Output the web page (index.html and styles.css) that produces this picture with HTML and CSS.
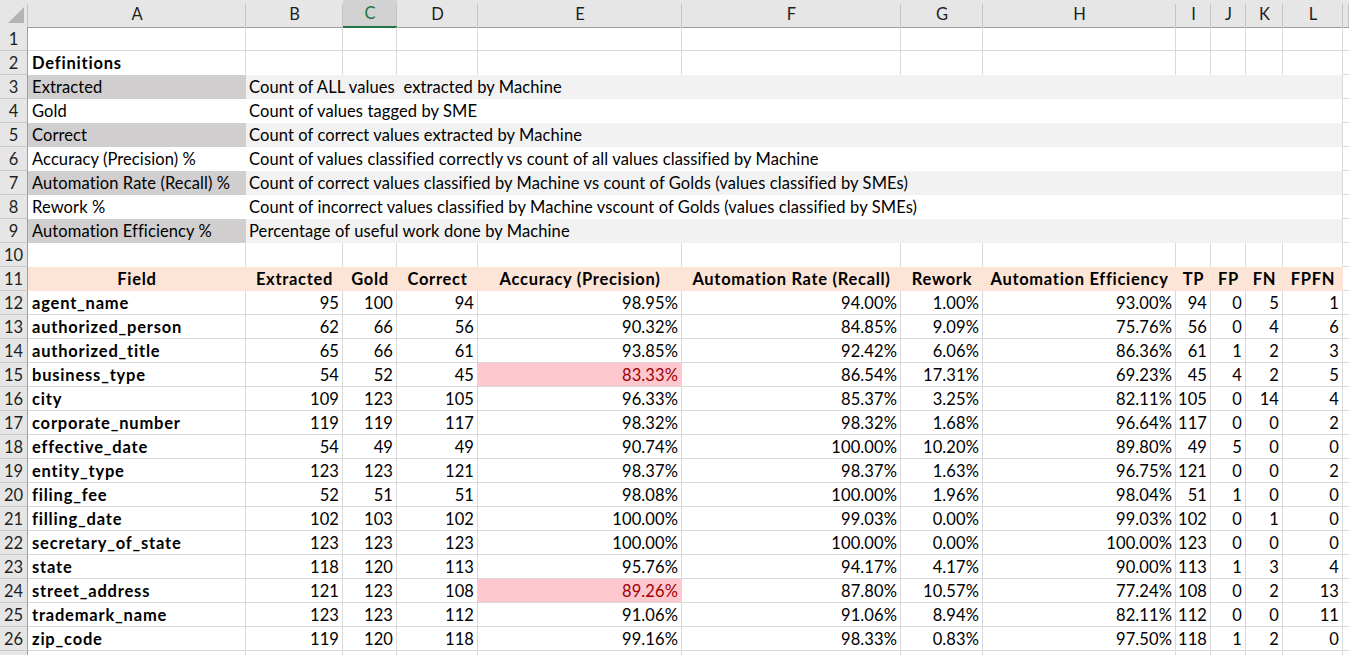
FILE: index.html
```html
<!DOCTYPE html>
<html>
<head>
<meta charset="utf-8">
<link rel="stylesheet" href="styles.css">
</head>
<body>
<div class="sheet">
  <div class="row colhead">
    <div class="ch corner"><svg width="28" height="27" viewBox="0 0 28 27"><polygon points="8,23 24,23 24,7" fill="#b4b4b4"/></svg></div>
    <div class="ch">A</div><div class="ch">B</div><div class="ch sel">C</div><div class="ch">D</div><div class="ch">E</div><div class="ch">F</div><div class="ch">G</div><div class="ch">H</div><div class="ch">I</div><div class="ch">J</div><div class="ch">K</div><div class="ch">L</div><div class="ch"></div>
  </div>

  <div class="row"><div class="c rh">1</div><div class="c"></div><div class="c"></div><div class="c"></div><div class="c"></div><div class="c"></div><div class="c"></div><div class="c"></div><div class="c"></div><div class="c"></div><div class="c"></div><div class="c"></div><div class="c"></div><div class="c"></div></div>
  <div class="row nobot"><div class="c rh">2</div><div class="c b">Definitions</div><div class="c"></div><div class="c"></div><div class="c"></div><div class="c"></div><div class="c"></div><div class="c"></div><div class="c"></div><div class="c"></div><div class="c"></div><div class="c"></div><div class="c"></div><div class="c m"></div></div>

  <div class="row def shade"><div class="c rh">3</div><div class="term">Extracted</div><div class="desc">Count of ALL values  extracted by Machine</div><div class="c"></div></div>
  <div class="row def"><div class="c rh">4</div><div class="term">Gold</div><div class="desc">Count of values tagged by SME</div><div class="c"></div></div>
  <div class="row def shade"><div class="c rh">5</div><div class="term">Correct</div><div class="desc">Count of correct values extracted by Machine</div><div class="c"></div></div>
  <div class="row def"><div class="c rh">6</div><div class="term">Accuracy (Precision) %</div><div class="desc">Count of values classified correctly vs count of all values classified by Machine</div><div class="c"></div></div>
  <div class="row def shade"><div class="c rh">7</div><div class="term">Automation Rate (Recall) %</div><div class="desc">Count of correct values classified by Machine vs count of Golds (values classified by SMEs)</div><div class="c"></div></div>
  <div class="row def"><div class="c rh">8</div><div class="term">Rework %</div><div class="desc">Count of incorrect values classified by Machine vscount of Golds (values classified by SMEs)</div><div class="c"></div></div>
  <div class="row def shade"><div class="c rh">9</div><div class="term">Automation Efficiency %</div><div class="desc">Percentage of useful work done by Machine</div><div class="c"></div></div>

  <div class="row nobot"><div class="c rh">10</div><div class="c"></div><div class="c"></div><div class="c"></div><div class="c"></div><div class="c"></div><div class="c"></div><div class="c"></div><div class="c"></div><div class="c"></div><div class="c"></div><div class="c"></div><div class="c"></div><div class="c m"></div></div>

  <div class="row head"><div class="c rh">11</div><div class="h">Field</div><div class="h">Extracted</div><div class="h">Gold</div><div class="h">Correct</div><div class="h">Accuracy (Precision)</div><div class="h">Automation Rate (Recall)</div><div class="h">Rework</div><div class="h">Automation Efficiency</div><div class="h">TP</div><div class="h">FP</div><div class="h">FN</div><div class="h">FPFN</div><div class="c"></div></div>

  <div class="row data"><div class="c rh">12</div><div class="c b">agent_name</div><div class="c n">95</div><div class="c n">100</div><div class="c n">94</div><div class="c n">98.95%</div><div class="c n">94.00%</div><div class="c n">1.00%</div><div class="c n">93.00%</div><div class="c n">94</div><div class="c n">0</div><div class="c n">5</div><div class="c n">1</div><div class="c"></div></div>
  <div class="row data"><div class="c rh">13</div><div class="c b">authorized_person</div><div class="c n">62</div><div class="c n">66</div><div class="c n">56</div><div class="c n">90.32%</div><div class="c n">84.85%</div><div class="c n">9.09%</div><div class="c n">75.76%</div><div class="c n">56</div><div class="c n">0</div><div class="c n">4</div><div class="c n">6</div><div class="c"></div></div>
  <div class="row data"><div class="c rh">14</div><div class="c b">authorized_title</div><div class="c n">65</div><div class="c n">66</div><div class="c n">61</div><div class="c n">93.85%</div><div class="c n">92.42%</div><div class="c n">6.06%</div><div class="c n">86.36%</div><div class="c n">61</div><div class="c n">1</div><div class="c n">2</div><div class="c n">3</div><div class="c"></div></div>
  <div class="row data"><div class="c rh">15</div><div class="c b">business_type</div><div class="c n">54</div><div class="c n">52</div><div class="c n">45</div><div class="c n bad">83.33%</div><div class="c n">86.54%</div><div class="c n">17.31%</div><div class="c n">69.23%</div><div class="c n">45</div><div class="c n">4</div><div class="c n">2</div><div class="c n">5</div><div class="c"></div></div>
  <div class="row data"><div class="c rh">16</div><div class="c b">city</div><div class="c n">109</div><div class="c n">123</div><div class="c n">105</div><div class="c n">96.33%</div><div class="c n">85.37%</div><div class="c n">3.25%</div><div class="c n">82.11%</div><div class="c n">105</div><div class="c n">0</div><div class="c n">14</div><div class="c n">4</div><div class="c"></div></div>
  <div class="row data"><div class="c rh">17</div><div class="c b">corporate_number</div><div class="c n">119</div><div class="c n">119</div><div class="c n">117</div><div class="c n">98.32%</div><div class="c n">98.32%</div><div class="c n">1.68%</div><div class="c n">96.64%</div><div class="c n">117</div><div class="c n">0</div><div class="c n">0</div><div class="c n">2</div><div class="c"></div></div>
  <div class="row data"><div class="c rh">18</div><div class="c b">effective_date</div><div class="c n">54</div><div class="c n">49</div><div class="c n">49</div><div class="c n">90.74%</div><div class="c n">100.00%</div><div class="c n">10.20%</div><div class="c n">89.80%</div><div class="c n">49</div><div class="c n">5</div><div class="c n">0</div><div class="c n">0</div><div class="c"></div></div>
  <div class="row data"><div class="c rh">19</div><div class="c b">entity_type</div><div class="c n">123</div><div class="c n">123</div><div class="c n">121</div><div class="c n">98.37%</div><div class="c n">98.37%</div><div class="c n">1.63%</div><div class="c n">96.75%</div><div class="c n">121</div><div class="c n">0</div><div class="c n">0</div><div class="c n">2</div><div class="c"></div></div>
  <div class="row data"><div class="c rh">20</div><div class="c b">filing_fee</div><div class="c n">52</div><div class="c n">51</div><div class="c n">51</div><div class="c n">98.08%</div><div class="c n">100.00%</div><div class="c n">1.96%</div><div class="c n">98.04%</div><div class="c n">51</div><div class="c n">1</div><div class="c n">0</div><div class="c n">0</div><div class="c"></div></div>
  <div class="row data"><div class="c rh">21</div><div class="c b">filling_date</div><div class="c n">102</div><div class="c n">103</div><div class="c n">102</div><div class="c n">100.00%</div><div class="c n">99.03%</div><div class="c n">0.00%</div><div class="c n">99.03%</div><div class="c n">102</div><div class="c n">0</div><div class="c n">1</div><div class="c n">0</div><div class="c"></div></div>
  <div class="row data"><div class="c rh">22</div><div class="c b">secretary_of_state</div><div class="c n">123</div><div class="c n">123</div><div class="c n">123</div><div class="c n">100.00%</div><div class="c n">100.00%</div><div class="c n">0.00%</div><div class="c n">100.00%</div><div class="c n">123</div><div class="c n">0</div><div class="c n">0</div><div class="c n">0</div><div class="c"></div></div>
  <div class="row data"><div class="c rh">23</div><div class="c b">state</div><div class="c n">118</div><div class="c n">120</div><div class="c n">113</div><div class="c n">95.76%</div><div class="c n">94.17%</div><div class="c n">4.17%</div><div class="c n">90.00%</div><div class="c n">113</div><div class="c n">1</div><div class="c n">3</div><div class="c n">4</div><div class="c"></div></div>
  <div class="row data"><div class="c rh">24</div><div class="c b">street_address</div><div class="c n">121</div><div class="c n">123</div><div class="c n">108</div><div class="c n bad">89.26%</div><div class="c n">87.80%</div><div class="c n">10.57%</div><div class="c n">77.24%</div><div class="c n">108</div><div class="c n">0</div><div class="c n">2</div><div class="c n">13</div><div class="c"></div></div>
  <div class="row data"><div class="c rh">25</div><div class="c b">trademark_name</div><div class="c n">123</div><div class="c n">123</div><div class="c n">112</div><div class="c n">91.06%</div><div class="c n">91.06%</div><div class="c n">8.94%</div><div class="c n">82.11%</div><div class="c n">112</div><div class="c n">0</div><div class="c n">0</div><div class="c n">11</div><div class="c"></div></div>
  <div class="row data"><div class="c rh">26</div><div class="c b">zip_code</div><div class="c n">119</div><div class="c n">120</div><div class="c n">118</div><div class="c n">99.16%</div><div class="c n">98.33%</div><div class="c n">0.83%</div><div class="c n">97.50%</div><div class="c n">118</div><div class="c n">1</div><div class="c n">2</div><div class="c n">0</div><div class="c"></div></div>
  <div class="row"><div class="c rh"></div><div class="c"></div><div class="c"></div><div class="c"></div><div class="c"></div><div class="c"></div><div class="c"></div><div class="c"></div><div class="c"></div><div class="c"></div><div class="c"></div><div class="c"></div><div class="c"></div><div class="c"></div></div>
</div>
</body>
</html>
```
FILE: styles.css
```css
html, body {
  margin: 0;
  padding: 0;
  height: 655px;
  overflow: hidden;
  background: #ffffff;
}

.sheet {
  font-family: Lato, "Open Sans", sans-serif;
  font-size: 16.5px;
  letter-spacing: 0.1px;
  color: #000000;
}

.row {
  display: grid;
  grid-template-columns: 28px 218px 97px 54px 81px 204px 219px 82px 193px 35px 35px 37px 60px 1fr;
  height: 24px;
}

.colhead {
  height: 27px;
}

.ch {
  box-sizing: border-box;
  background: linear-gradient(#c4c4c4, #c4c4c4) right bottom / 1px 23px no-repeat, #e6e6e6;
  border-bottom: 1px solid #9e9e9e;
  display: flex;
  align-items: center;
  justify-content: center;
  color: #1f1f1f;
  letter-spacing: 0;
}

.ch.corner {
  padding: 0;
  align-items: stretch;
  justify-content: stretch;
}

.ch.sel {
  background: linear-gradient(#c4c4c4, #c4c4c4) right bottom / 1px 23px no-repeat, #d2d2d2;
  border-bottom: 2px solid #217346;
  color: #217346;
}

.c {
  box-sizing: border-box;
  border-right: 1px solid #d9d9d9;
  border-bottom: 1px solid #d9d9d9;
  padding: 0 3px 0 4px;
  display: flex;
  align-items: center;
  white-space: pre;
  overflow: hidden;
}

.rh {
  background: #e6e6e6;
  border-right: 1px solid #9e9e9e;
  border-bottom: 1px solid #c8c8c8;
  justify-content: center;
  padding: 0;
  color: #1f1f1f;
  letter-spacing: 0;
}

.b {
  font-weight: 700;
  letter-spacing: 0.8px;
}

.n {
  justify-content: flex-end;
}

.nobot .c:not(.rh):not(.m) {
  border-bottom-color: transparent;
}

.def .term {
  padding-left: 4px;
  display: flex;
  align-items: center;
  white-space: pre;
}

.def .desc {
  grid-column: 3 / 14;
  padding-left: 3px;
  display: flex;
  align-items: center;
  white-space: pre;
  border-right: 1px solid #d9d9d9;
}

.def.shade .term {
  background: #d0cece;
}

.def.shade .desc {
  background: #f2f2f2;
}

.head .h {
  background: #fce4d6;
  font-weight: 700;
  letter-spacing: 0.7px;
  display: flex;
  align-items: center;
  justify-content: center;
  white-space: pre;
}

.bad {
  background: #ffc7ce;
  color: #9c0006;
}
```
